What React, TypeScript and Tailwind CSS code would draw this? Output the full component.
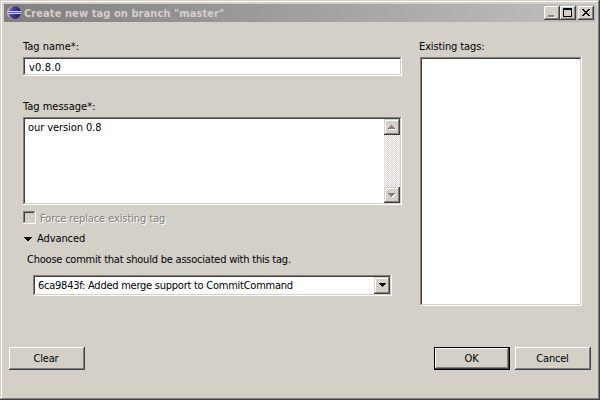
import React from "react";

const sunken =
  "bg-white p-[2px] shadow-[inset_-1px_-1px_0_#fff,inset_1px_1px_0_#808080,inset_-2px_-2px_0_#d4d0c8,inset_2px_2px_0_#404040]";
const raised =
  "bg-[#d4d0c8] shadow-[inset_-1px_-1px_0_#404040,inset_1px_1px_0_#fff,inset_-2px_-2px_0_#808080]";
const raisedThumb =
  "bg-[#d4d0c8] shadow-[inset_-1px_-1px_0_#404040,inset_1px_1px_0_#d4d0c8,inset_-2px_-2px_0_#808080,inset_2px_2px_0_#fff]";

function EclipseIcon() {
  return (
    <svg width="16" height="16" viewBox="0 0 16 16" className="shrink-0">
      <defs>
        <linearGradient id="ball" x1="0" y1="0" x2="1" y2="0.3">
          <stop offset="0" stopColor="#9a8cc4" />
          <stop offset="0.4" stopColor="#4c469c" />
          <stop offset="1" stopColor="#241c60" />
        </linearGradient>
      </defs>
      <circle cx="7.4" cy="7.5" r="6.5" fill="#e0a8b8" />
      <circle cx="8.6" cy="7.5" r="6.4" fill="url(#ball)" />
      <path d="M1.5 6.5h13.4M1.5 8.5h13.4" stroke="#cdd6f0" strokeWidth="1" shapeRendering="crispEdges" />
      <path d="M1.5 7.5h13.4" stroke="#5560b0" strokeWidth="1" shapeRendering="crispEdges" />
    </svg>
  );
}

function Glyph({ d, fill, w, h }: { d: string; fill: string; w: number; h: number }) {
  return (
    <svg width={w} height={h} viewBox={`0 0 ${w} ${h}`} shapeRendering="crispEdges" className="block">
      <path d={d} fill={fill} />
    </svg>
  );
}

const down = "M0 0h7v1h-1v1h-1v1h-1v1h-1v-1h-1v-1h-1v-1h-1z";

function TitleBar() {
  return (
    <div className="flex h-[18px] items-center bg-linear-to-r from-[#808080] to-[#c0c0c0] pl-[2px] pr-[2px]">
      <EclipseIcon />
      <span className="ml-[2px] text-[11px] leading-[13px] font-bold tracking-[0.08px] text-[#d4d0c8]">
        Create new tag on branch "master"
      </span>
      <div className="ml-auto flex">
        <div className={`h-[14px] w-4 ${raised}`}>
          <svg width="16" height="14" shapeRendering="crispEdges" className="block">
            <path d="M5 10h6v2h-6z" fill="#fff" />
            <path d="M4 9h6v2h-6z" fill="#808080" />
          </svg>
        </div>
        <div className={`h-[14px] w-4 ${raised}`}>
          <svg width="16" height="14" shapeRendering="crispEdges" className="block">
            <path d="M3 2h9v9h-9zM4 4v6h7v-6z" fill="#000" fillRule="evenodd" />
          </svg>
        </div>
        <div className={`ml-[2px] h-[14px] w-4 ${raised}`}>
          <svg width="16" height="14" shapeRendering="crispEdges" className="block">
            <path
              d="M4 3h2v1h1v1h2v-1h1v-1h2v1h-1v1h-1v1h-1v1h1v1h1v1h1v1h-2v-1h-1v-1h-2v1h-1v1h-2v-1h1v-1h1v-1h1v-1h-1v-1h-1v-1h-1z"
              fill="#000"
            />
          </svg>
        </div>
      </div>
    </div>
  );
}

function ScrollBar() {
  return (
    <div className="ml-auto flex h-full w-4 flex-col justify-between bg-[repeating-conic-gradient(#fff_0_25%,#d4d0c8_0_50%)] bg-[length:2px_2px]">
      <div className={`h-4 w-4 ${raisedThumb}`}>
        <svg width="16" height="16" shapeRendering="crispEdges" className="block">
          <path d="M5 10h7v1h-7z" fill="#fff" />
          <path d="M4 9h7v1h-7zM5 8h5v1h-5zM6 7h3v1h-3zM7 6h1v1h-1z" fill="#808080" />
        </svg>
      </div>
      <div className={`h-4 w-4 ${raisedThumb}`}>
        <svg width="16" height="16" shapeRendering="crispEdges" className="block">
          <path transform="translate(5 7)" d={down} fill="#fff" />
          <path transform="translate(4 6)" d={down} fill="#808080" />
        </svg>
      </div>
    </div>
  );
}

export default function App() {
  return (
    <div className="flex h-[400px] w-[600px] flex-col bg-[#d4d0c8] p-1 font-['DejaVu_Sans_Condensed','DejaVu_Sans',sans-serif] text-[11px] leading-[13px] whitespace-nowrap text-black shadow-[inset_-1px_-1px_0_#404040,inset_1px_1px_0_#d4d0c8,inset_-2px_-2px_0_#808080,inset_2px_2px_0_#fff]">
      <TitleBar />
      <div className="flex gap-[18px] pt-[18px] pr-[14px] pl-[19px]">
        <div className="flex w-[379px] flex-col">
          <label>Tag name*:</label>
          <div className={`mt-1 flex h-[19px] items-center ${sunken}`}>
            <span className="pt-px pl-[4px] tracking-[0.15px]">v0.8.0</span>
          </div>
          <label className="mt-6">Tag message*:</label>
          <div className={`mt-1 flex h-[88px] ${sunken}`}>
            <span className="pt-[2px] pl-[3px] tracking-[-0.08px]">our version 0.8</span>
            <ScrollBar />
          </div>
          <div className="mt-[6px] flex h-[13px]">
            <div className={`h-[13px] w-[13px] !bg-[#d4d0c8] ${sunken}`} />
            <span className="ml-[4px] pt-px tracking-[-0.1px] text-[#808080] [text-shadow:1px_1px_0_#fff]">
              Force replace existing tag
            </span>
          </div>
          <div className="mt-2 flex items-center">
            <div className="ml-px">
              <Glyph w={8} h={4} fill="#000" d="M0 0h8v1h-1v1h-1v1h-1v1h-2v-1h-1v-1h-1v-1h-1z" />
            </div>
            <span className="ml-[5px] tracking-[-0.1px]">Advanced</span>
          </div>
          <span className="mt-2 ml-[4px] tracking-[-0.22px]">Choose commit that should be associated with this tag.</span>
          <div className={`mt-[9px] ml-[10px] flex h-[21px] w-[359px] items-center ${sunken}`}>
            <span className="pl-[3px] tracking-[-0.25px]">6ca9843f: Added merge support to CommitCommand</span>
            <div className={`ml-auto flex h-[17px] w-4 justify-center pt-[6px] ${raisedThumb}`}>
              <Glyph w={7} h={4} fill="#000" d={down} />
            </div>
          </div>
        </div>
        <div className="flex w-[162px] flex-col">
          <label className="-ml-px tracking-[-0.12px]">Existing tags:</label>
          <div className={`mt-1 h-[249px] ${sunken}`} />
        </div>
      </div>
      <div className="mt-[41px] flex px-[5px]">
        <button className={`h-[23px] w-[76px] pr-[2px] ${raised}`}>
          <span className="tracking-[-0.2px]">Clear</span>
        </button>
        <div className="ml-auto h-[23px] w-[76px] bg-black p-px">
          <button className={`h-[21px] w-[74px] pr-px ${raised}`}>
            <span className="tracking-[-0.2px]">OK</span>
          </button>
        </div>
        <button className={`ml-[5px] h-[23px] w-[76px] pr-px ${raised}`}>
          <span className="tracking-[-0.2px]">Cancel</span>
        </button>
      </div>
    </div>
  );
}
